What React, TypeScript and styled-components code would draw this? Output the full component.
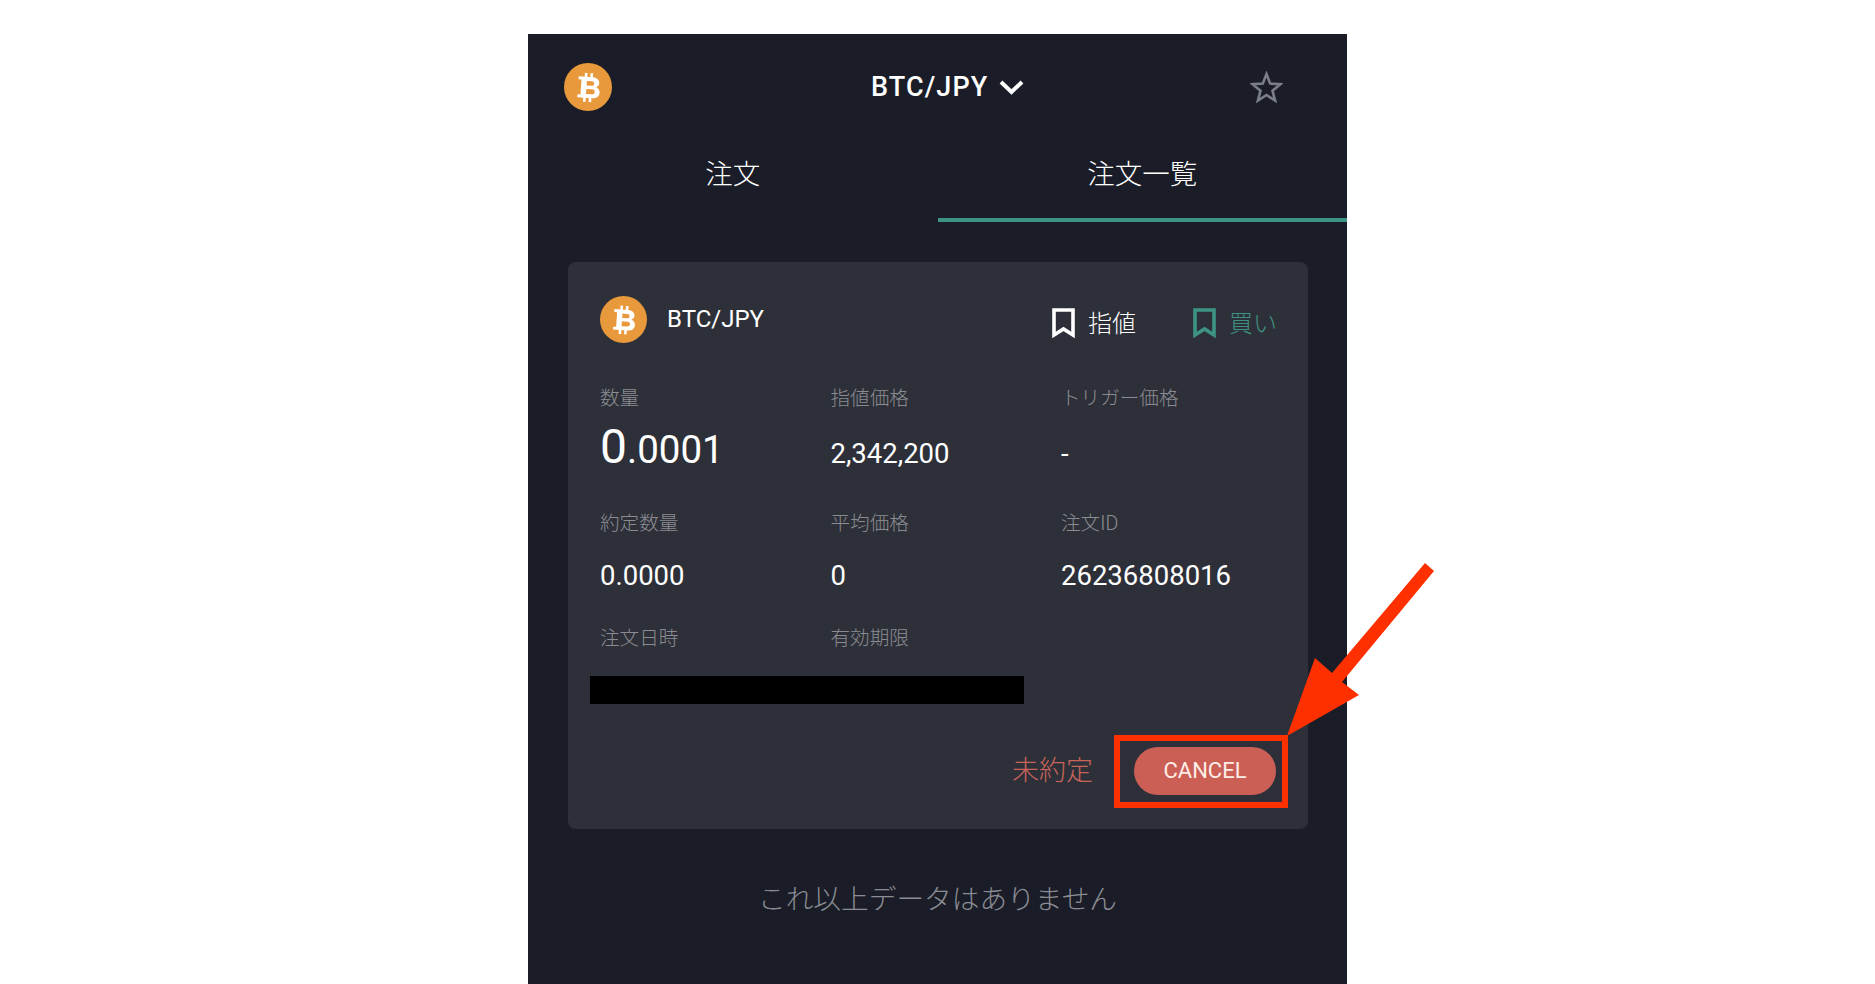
import React from 'react';
import styled, { createGlobalStyle } from 'styled-components';

const GlobalStyle = createGlobalStyle`
  html, body {
    margin: 0;
    height: 100%;
    overflow: hidden;
    background: #ffffff;
    font-family: Roboto, "Noto Sans CJK JP", sans-serif;
  }
`;

const Page = styled.div`
  position: relative;
  height: 984px;
  overflow: hidden;
`;

const Panel = styled.div`
  width: 819px;
  height: 950px;
  margin: 34px auto 0;
  background: #1a1d28;
  color: #ffffff;
`;

const Header = styled.div`
  display: grid;
  grid-template-columns: 307px auto 1fr;
  align-items: center;
  padding: 29px 64px 0 36px;
`;

const PairSelect = styled.div`
  display: flex;
  align-items: center;
  gap: 11px;
  font-size: 27px;
  font-weight: 500;
  line-height: 48px;
  letter-spacing: 1.1px;
`;

const StarButton = styled.div`
  justify-self: end;
  display: flex;
`;

const Tabs = styled.div`
  display: grid;
  grid-template-columns: 1fr 1fr;
  margin-top: 19px;
`;

const Tab = styled.div<{ $active?: boolean }>`
  padding: 18px 0 16px;
  font-size: 27.5px;
  line-height: 54px;
  font-weight: 300;
  text-align: center;
  border-bottom: 4px solid ${p => (p.$active ? '#3d9485' : 'transparent')};
`;

const Card = styled.div`
  margin: 40px 39px 0 40px;
  padding: 34px 32px 34px;
  height: 567px;
  box-sizing: border-box;
  background: #2e3039;
  border-radius: 8px;
`;

const CardHead = styled.div`
  display: flex;
  align-items: center;
  height: 47px;
`;

const CardName = styled.div`
  margin-left: 20px;
  font-size: 24px;
  font-weight: 400;
  margin-top: -2px;
`;

const Tags = styled.div`
  margin: 0 -1px 0 auto;
  display: flex;
  gap: 57px;
  padding-top: 7px;
`;

const Tag = styled.div<{ $color: string }>`
  display: flex;
  align-items: center;
  gap: 13px;
  font-size: 24px;
  line-height: 30px;
  font-weight: 300;
  color: ${p => p.$color};
`;

const TagText = styled.span`
  margin-top: 1px;
`;

const Fields = styled.div`
  display: grid;
  grid-template-columns: 230.5px 230.5px 1fr;
  align-items: baseline;
  margin-top: 44px;
`;

const Label = styled.div`
  font-size: 19.6px;
  line-height: 24px;
  font-weight: 300;
  color: #8a8c92;
  white-space: nowrap;
`;

const Value = styled.div<{ $top: number; $bottom: number }>`
  font-size: 27.5px;
  line-height: 40px;
  margin: ${p => p.$top}px 0 ${p => p.$bottom}px;
  white-space: nowrap;
`;

const BigValue = styled.span`
  font-size: 48px;
  line-height: 40px;
`;

const MidValue = styled.span`
  font-size: 38.5px;
`;

const Redacted = styled.div`
  width: 434px;
  height: 28px;
  margin: 25px 0 0 -10px;
  background: #000000;
`;

const StatusRow = styled.div`
  display: flex;
  justify-content: flex-end;
  align-items: center;
  gap: 41px;
  margin-top: 43px;
`;

const Status = styled.div`
  margin-bottom: 5px;
  font-size: 27px;
  font-weight: 300;
  color: #c8645a;
`;

const CancelWrap = styled.div`
  position: relative;
`;

const CancelButton = styled.div`
  width: 142px;
  height: 48px;
  border-radius: 24px;
  background: #cc5f55;
  color: #fdeee8;
  font-size: 22px;
  line-height: 48px;
  text-align: center;
`;

const Highlight = styled.div`
  position: absolute;
  inset: -12px -12px -13px -20px;
  border: 6.5px solid #ff3000;
`;

const Arrow = styled.svg`
  position: absolute;
  left: 1280px;
  top: 560px;
`;

const NoMore = styled.div`
  margin-top: 56px;
  font-size: 27.7px;
  line-height: 30px;
  font-weight: 300;
  text-align: center;
  color: #8a8c92;
`;

const BitcoinLogo = ({ size }: { size: number }) => (
  <svg width={size} height={size} viewBox="0 0 48 48">
    <circle cx="24" cy="24" r="24" fill="#e8993c" />
    <g fill="#ffffff" transform="rotate(4 24 24)">
      <path
        fillRule="evenodd"
        d="M14 14H28C33 14 35 17 35 19.5C35 21.5 33.5 23 32 23.8C34.5 24.5 36 26.5 36 29C36 32.5 33.5 35 29 35H14V32H17V17H14ZM22.5 18V22.5H27.5C29 22.5 30 21.5 30 20.2C30 19 29 18 27.5 18ZM22.5 26V31H28C30 31 31 30 31 28.5C31 27 30 26 28 26Z"
      />
      <rect x="20" y="10" width="2.6" height="5" />
      <rect x="25.6" y="10" width="2.6" height="5" />
      <rect x="20" y="34" width="2.6" height="5" />
      <rect x="25.6" y="34" width="2.6" height="5" />
    </g>
  </svg>
);

const Chevron = () => (
  <svg width="25" height="16" viewBox="0 0 25 16">
    <path d="M2 3L12.5 13L23 3" fill="none" stroke="#ffffff" strokeWidth="4" />
  </svg>
);

const StarIcon = () => (
  <svg width="33" height="32" viewBox="0 0 33 32">
    <path
      d="M16.5 3L20.2 12.6L30.5 13.2L22.5 19.7L25.1 29.6L16.5 24L7.9 29.6L10.5 19.7L2.5 13.2L12.8 12.6Z"
      fill="none"
      stroke="#7b7e85"
      strokeWidth="2.6"
    />
  </svg>
);

const BookmarkIcon = ({ color }: { color: string }) => (
  <svg width="23" height="30" viewBox="0 0 23 30">
    <path d="M2 2H21V27L11.5 21L2 27Z" fill="none" stroke={color} strokeWidth="3.6" />
  </svg>
);

export default function App() {
  return (
    <Page>
      <GlobalStyle />
      <Panel>
        <Header>
          <BitcoinLogo size={48} />
          <PairSelect>
            BTC/JPY
            <Chevron />
          </PairSelect>
          <StarButton>
            <StarIcon />
          </StarButton>
        </Header>
        <Tabs>
          <Tab>注文</Tab>
          <Tab $active>注文一覧</Tab>
        </Tabs>
        <Card>
          <CardHead>
            <BitcoinLogo size={47} />
            <CardName>BTC/JPY</CardName>
            <Tags>
              <Tag $color="#ffffff">
                <BookmarkIcon color="#ffffff" />
                <TagText>指値</TagText>
              </Tag>
              <Tag $color="#3e8f7f">
                <BookmarkIcon color="#3d9485" />
                <TagText>買い</TagText>
              </Tag>
            </Tags>
          </CardHead>
          <Fields>
            <Label>数量</Label>
            <Label>指値価格</Label>
            <Label>トリガー価格</Label>
            <Value $top={16} $bottom={38}>
              <BigValue>0</BigValue>
              <MidValue>.0001</MidValue>
            </Value>
            <Value $top={16} $bottom={38}>2,342,200</Value>
            <Value $top={16} $bottom={38}>-</Value>
            <Label>約定数量</Label>
            <Label>平均価格</Label>
            <Label>注文ID</Label>
            <Value $top={20} $bottom={31}>0.0000</Value>
            <Value $top={20} $bottom={31}>0</Value>
            <Value $top={20} $bottom={31}>26236808016</Value>
            <Label>注文日時</Label>
            <Label>有効期限</Label>
            <Label />
          </Fields>
          <Redacted />
          <StatusRow>
            <Status>未約定</Status>
            <CancelWrap>
              <CancelButton>CANCEL</CancelButton>
              <Highlight />
            </CancelWrap>
          </StatusRow>
        </Card>
        <NoMore>これ以上データはありません</NoMore>
      </Panel>
      <Arrow width="160" height="180" viewBox="0 0 160 180">
        <path
          fill="#ff3000"
          d="M7 176L35 98L52 113L145 3L154 11L62 122L79 135Z"
        />
      </Arrow>
    </Page>
  );
}
